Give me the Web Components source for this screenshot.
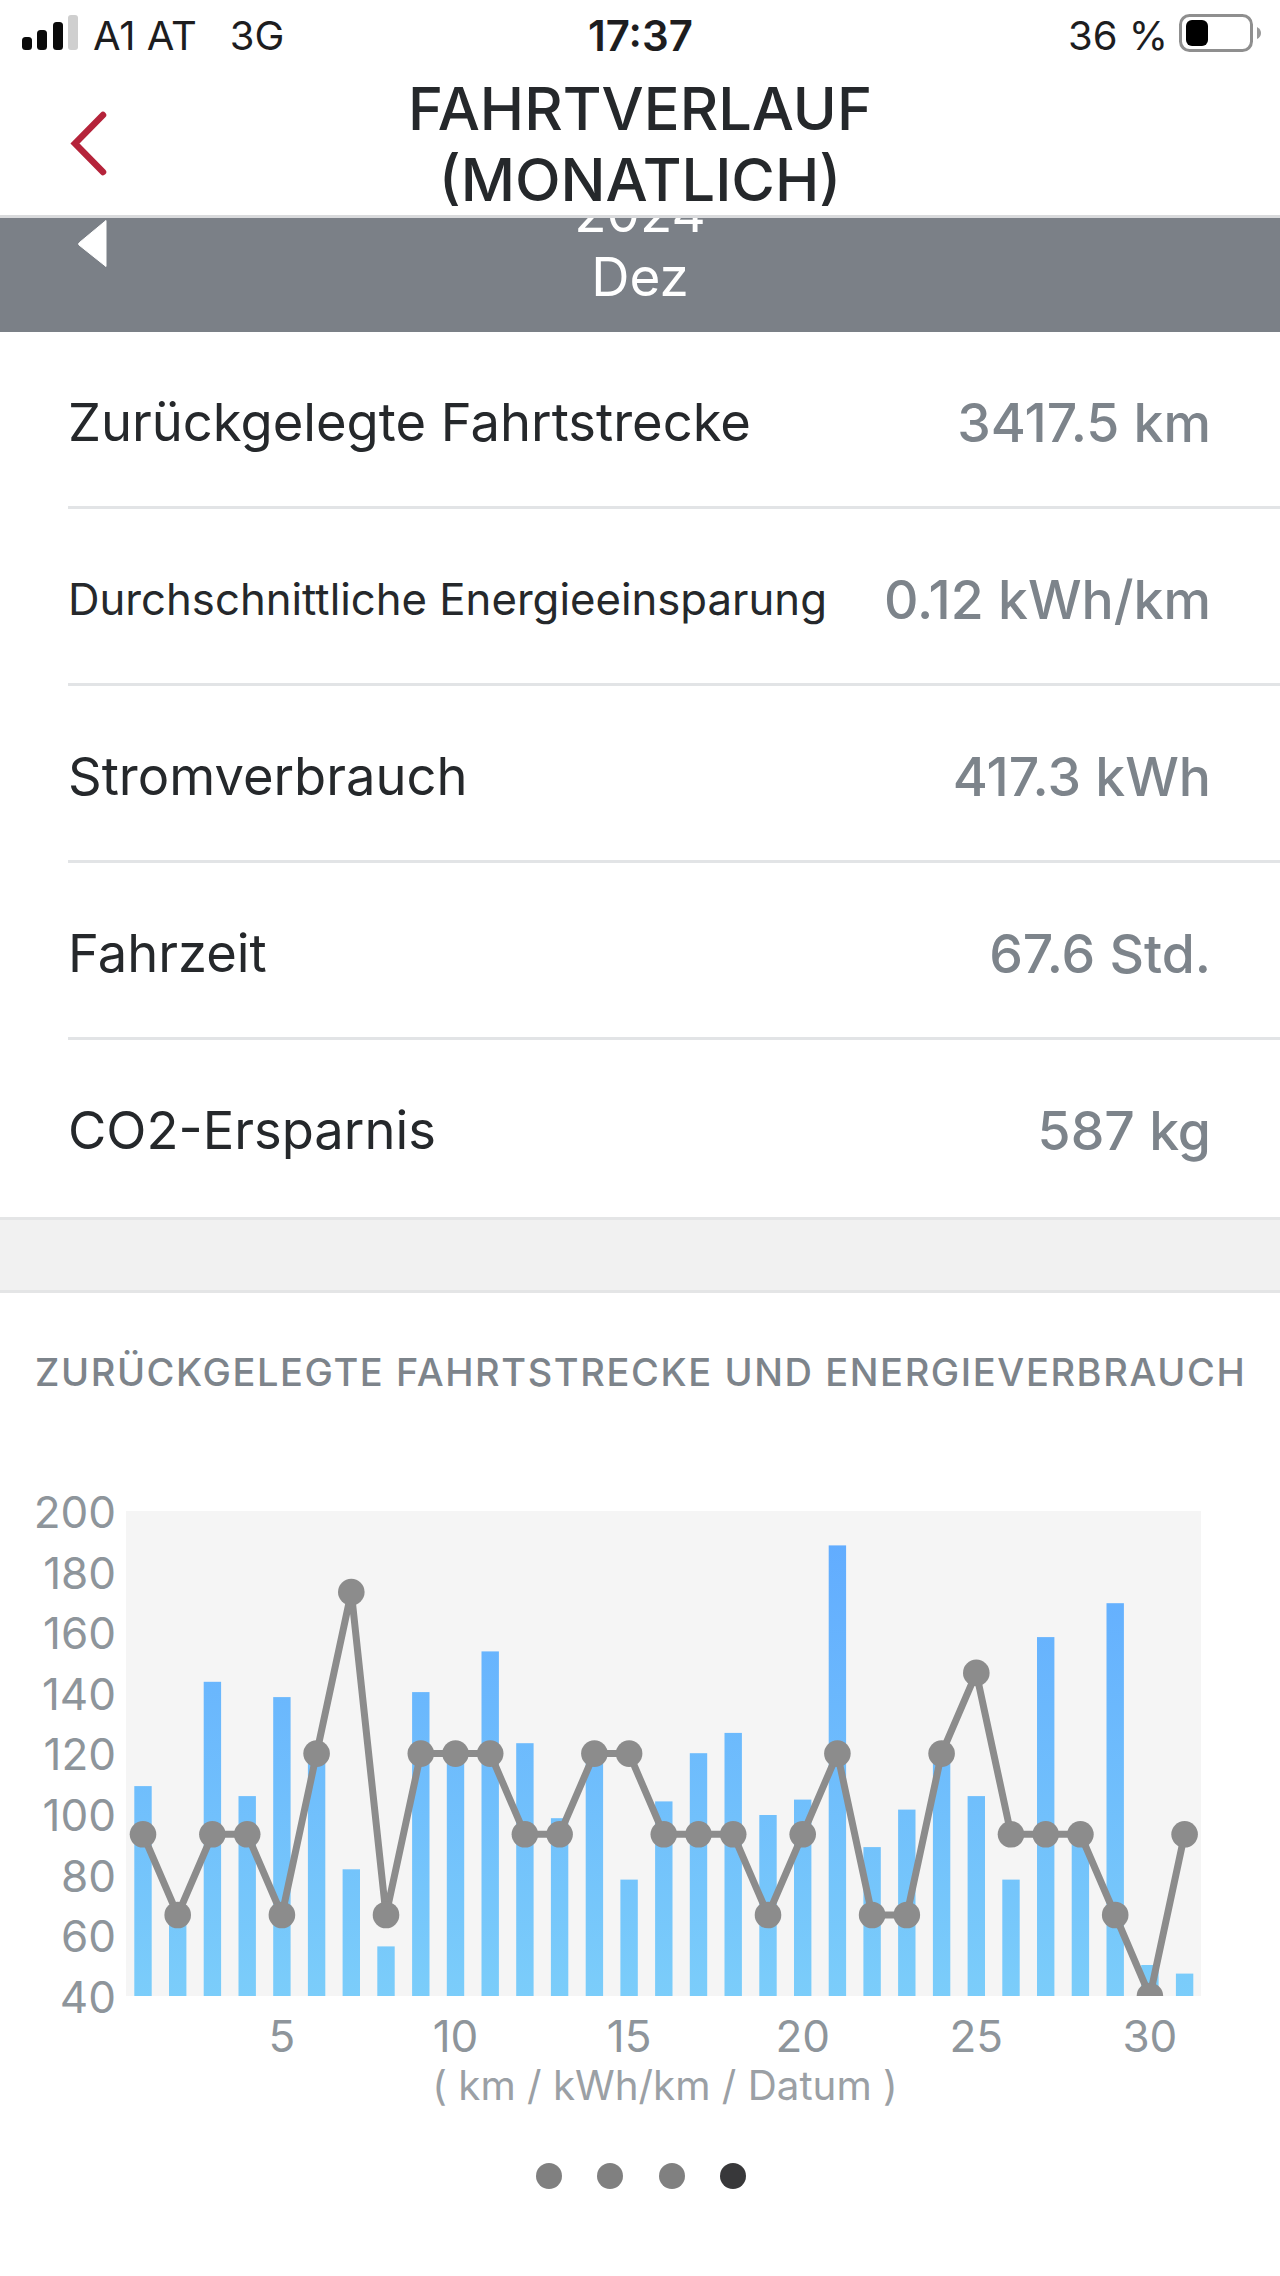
<!DOCTYPE html>
<html lang="de"><head><meta charset="utf-8"><title>Fahrtverlauf</title>
<style>
html,body{margin:0;padding:0;background:#fff}
body{font-family:Inter,"Liberation Sans",sans-serif;color:#25282b;width:1280px;height:2276px;overflow:hidden}
</style></head><body>
<trip-app>
  <status-bar></status-bar>
  <nav-header>FAHRTVERLAUF<br>(MONATLICH)</nav-header>
  <period-bar year="2024" month="Dez"></period-bar>
  <stat-row label="Zurückgelegte Fahrtstrecke" value="3417.5 km"></stat-row>
  <stat-row small label="Durchschnittliche Energieeinsparung" value="0.12 kWh/km"></stat-row>
  <stat-row label="Stromverbrauch" value="417.3 kWh"></stat-row>
  <stat-row label="Fahrzeit" value="67.6 Std."></stat-row>
  <stat-row last label="CO2-Ersparnis" value="587 kg"></stat-row>
  <section-gap></section-gap>
  <chart-card heading="ZURÜCKGELEGTE FAHRTSTRECKE UND ENERGIEVERBRAUCH"></chart-card>
  <page-dots count="4" active="3"></page-dots>
</trip-app>
<script>
function def(name, html){
  customElements.define(name, class extends HTMLElement{
    connectedCallback(){
      if(this.shadowRoot) return;
      const r=this.attachShadow({mode:'open'});
      r.innerHTML = typeof html==='function'?html(this):html;
    }
  });
}
def('trip-app',`<style>:host{display:flex;flex-direction:column;width:1280px;height:2276px;background:#fff}</style><slot></slot>`);
def('status-bar',`<style>
:host{display:grid;grid-template-columns:1fr auto 1fr;align-items:center;height:70px;box-sizing:border-box;padding:0 19px 0 22px;font-size:40px;color:#1d1d1f;font-family:Inter,sans-serif;flex:none}
.l,.r{display:flex;align-items:center}
.r{justify-content:flex-end}
.sig{display:block;margin:0 15px 5px 0}
.t{font-weight:600;font-size:42px;transform:translateX(-1px)}
.c{margin-left:33px}
.pct{margin-right:10px}
svg{display:block}
.bat{margin-bottom:4px}
</style>
<div class="l"><svg class="sig" width="56" height="35" viewBox="0 0 56 35"><g fill="#0a0a0a"><rect x="0" y="22" width="10" height="13" rx="3.500"/><rect x="15" y="15" width="10" height="20" rx="3.500"/><rect x="31" y="7" width="10" height="28" rx="3.500"/></g><rect x="46" y="0" width="10" height="35" rx="3" fill="#cfcfcf"/></svg><span>A1 AT</span><span class="c">3G</span></div>
<div class="t">17:37</div>
<div class="r"><span class="pct">36 %</span><svg class="bat" width="83" height="40" viewBox="0 0 83 40"><rect x="2.500" y="2.500" width="71" height="35" rx="9" fill="#fff" stroke="#8f8f8f" stroke-width="3"/><rect x="8" y="7" width="22" height="26" rx="6" fill="#000"/><path d="M79 14Q83 16 83 20T79 26Z" fill="#9a9a9a"/></svg></div>`);
def('nav-header',`<style>
:host{display:block;position:relative;height:148px;box-sizing:border-box;border-bottom:3px solid #d9dadc;background:#fff;text-align:center;font-size:59.500px;line-height:71px;color:#25282b;font-weight:500;padding-top:3px;white-space:nowrap;flex:none}
svg{position:absolute;left:66px;top:36px}
</style>
<svg width="46" height="74" viewBox="0 0 46 74"><path d="M37 9 9 37.500 37 66" fill="none" stroke="#b5233a" stroke-width="6.500" stroke-linecap="round" stroke-linejoin="miter"/></svg><slot></slot>`);
def('period-bar',t=>`<style>
:host{display:flex;position:relative;height:114px;background:#7b8087;overflow:hidden;color:#fff;flex-direction:column;align-items:center;justify-content:flex-end;font-size:53px;line-height:64px;box-sizing:border-box;padding-bottom:23px;flex:none}
svg{position:absolute;left:76px;top:1px}
</style><svg width="32" height="50" viewBox="0 0 32 50"><path d="M30 1.500 3.500 23.500Q2 24.500 3 26L30 47.500Z" fill="#fff" stroke="#fff" stroke-linejoin="round"/></svg><div>${t.getAttribute('year')}</div><div>${t.getAttribute('month')}</div>`);
def('stat-row',t=>`<style>
:host{display:block;padding-left:68px;flex:none}
.row{display:flex;align-items:center;justify-content:space-between;height:168px;padding:6px 69px 0 0;border-bottom:3px solid ${t.hasAttribute('last')?'transparent':'#e2e4e6'};white-space:nowrap}
.a{font-size:${t.hasAttribute('small')?'43.700':'52.500'}px;color:#25282b}
.b{font-size:53.500px;color:#7d848b;font-weight:500}
</style><div class="row"><span class="a">${t.getAttribute('label')}</span><span class="b">${t.getAttribute('value')}</span></div>`);
def('section-gap',`<style>:host{display:block;height:76px;box-sizing:border-box;background:#f1f1f1;border-top:3px solid #e4e5e6;border-bottom:3px solid #e4e5e6;flex:none}</style>`);
def('chart-card',t=>{
 const H=[857,1190,565,885,608,770,1090,1306,594,770,480,737,947,770,1119,900,765,708,938,895,183,1028,923,770,885,1119,440,1000,345,1358,1382];
 const L=[992,1218,992,992,1218,766,314,1218,766,766,766,992,992,766,766,992,992,992,1218,992,766,1218,1218,766,540,992,992,992,1218,1445,992];
 const Y=z=>1480+z/2.8, X=i=>143+i*34.72, T=1293;
 const pts=L.map((v,i)=>[X(i).toFixed(1),(Y(v)-T).toFixed(1)]);
 const bars=H.map((v,i)=>`<rect x="${(X(i)-8.7).toFixed(1)}" y="${(Y(v)-T).toFixed(1)}" width="17.4" height="${(1996-Y(v)).toFixed(1)}" fill="url(#g)"/>`).join('');
 const dots=pts.map(p=>`<circle cx="${p[0]}" cy="${p[1]}" r="13.300"/>`).join('');
 const yl=[200,180,160,140,120,100,80,60,40].map((v,i)=>`<text x="116" y="${(1512+i*60.6-T+16).toFixed(1)}" text-anchor="end" class="ax">${v}</text>`).join('');
 const xl=[5,10,15,20,25,30].map(d=>`<text x="${X(d-1).toFixed(1)}" y="${2052-T}" text-anchor="middle" class="ax">${d}</text>`).join('');
 return `<style>
:host{display:block;height:821px;position:relative;flex:none}
svg{display:block}
.ax{font:400 44px Inter,sans-serif;fill:#8e959b}
.h{font:500 38px Inter,sans-serif;fill:#7d848b;letter-spacing:1.600px}
.u{font:400 40.300px Inter,sans-serif;fill:#9ba0a5}
</style><svg width="1280" height="821" viewBox="0 0 1280 821">
<defs><linearGradient id="g" gradientUnits="userSpaceOnUse" x1="0" y1="${1511-T}" x2="0" y2="${1996-T}"><stop offset="0" stop-color="#60aaff"/><stop offset="1" stop-color="#7bcdfa"/></linearGradient>
<clipPath id="c"><rect x="126" y="${1511-T}" width="1075" height="485"/></clipPath></defs>
<text x="35" y="${1386-T}" class="h">${t.getAttribute('heading')}</text>
<rect x="126" y="${1511-T}" width="1075" height="485" fill="#f5f5f5"/>
${bars}
<g clip-path="url(#c)"><polyline points="${pts.map(p=>p.join(',')).join(' ')}" fill="none" stroke="#8c8c8c" stroke-width="7"/><g fill="#8c8c8c">${dots}</g></g>
${yl}${xl}
<text x="665" y="${2100-T}" text-anchor="middle" class="u">( km / kWh/km / Datum )</text>
</svg>`;
});
def('page-dots',t=>{
 const n=+t.getAttribute('count'),a=+t.getAttribute('active');
 return `<style>:host{display:flex;justify-content:center;gap:35.500px;margin-top:49px;height:26px;flex:none;padding-left:2px}
i{display:block;width:26px;height:26px;border-radius:50%;background:#808080}i.on{background:#38383a}</style>`+Array.from({length:n},(_,i)=>`<i class="${i==a?'on':''}"></i>`).join('');
});
</script>
</body></html>
